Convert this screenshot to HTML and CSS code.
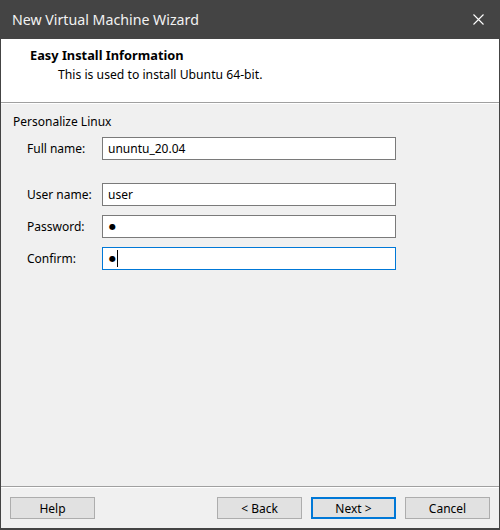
FILE: index.html
```html
<!DOCTYPE html>
<html>
<head>
<meta charset="utf-8">
<title>New Virtual Machine Wizard</title>
<link rel="stylesheet" href="styles.css">
</head>
<body>
<div class="window">
  <div class="titlebar">
    <span class="title">New Virtual Machine Wizard</span>
    <svg class="close" width="11" height="11" viewBox="0 0 11 11"><path d="M0.5 0.5 L10.5 10.5 M10.5 0.5 L0.5 10.5" stroke="#ffffff" stroke-width="1.1" fill="none"/></svg>
  </div>
  <div class="header">
    <div class="heading">Easy Install Information</div>
    <div class="subheading">This is used to install Ubuntu 64-bit.</div>
  </div>
  <div class="content">
    <div class="group-label">Personalize Linux</div>
    <div class="form">
      <div class="row">
        <span class="label">Full name:</span>
        <div class="field">ununtu_20.04</div>
      </div>
      <div class="row row-gap">
        <span class="label">User name:</span>
        <div class="field">user</div>
      </div>
      <div class="row">
        <span class="label">Password:</span>
        <div class="field"><span class="dot">●</span></div>
      </div>
      <div class="row">
        <span class="label">Confirm:</span>
        <div class="field focused"><span class="dot">●</span><span class="caret"></span></div>
      </div>
    </div>
  </div>
  <div class="footer">
    <button class="btn">Help</button>
    <div class="spacer"></div>
    <button class="btn">&lt; Back</button>
    <button class="btn default">Next &gt;</button>
    <button class="btn">Cancel</button>
  </div>
</div>
</body>
</html>
```

FILE: styles.css
```css
html, body {
  margin: 0;
  padding: 0;
  background: #f0f0f0;
}
.window {
  width: 500px;
  height: 530px;
  box-sizing: border-box;
  border: 1px solid #444444;
  border-top: none;
  border-bottom-width: 2px;
  background: #f0f0f0;
  display: flex;
  flex-direction: column;
  font-family: "Noto Sans", "Open Sans", sans-serif;
  font-size: 12px;
  color: #000;
}
.titlebar {
  height: 39px;
  background: #444444;
  display: flex;
  align-items: center;
  margin: 0 -1px;
  padding: 0 16px 0 12px;
}
.title {
  color: #f2f2f2;
  font-size: 14.2px;
  flex: 1;
  padding-bottom: 1px;
}
.close {
  display: block;
}
.header {
  height: 63px;
  background: #ffffff;
  border-bottom: 1px solid #a0a0a0;
  box-shadow: 0 1px 0 #ffffff;
  padding-left: 29px;
}
.heading {
  font-weight: bold;
  font-size: 12.8px;
  margin-top: 7px;
  line-height: 18px;
}
.subheading {
  padding-left: 28px;
  line-height: 18px;
  margin-top: 2px;
  font-size: 12.2px;
}
.content {
  flex: 1;
  padding: 11px 0 0 12px;
}
.group-label {
  line-height: 16px;
}
.form {
  margin: 7px 0 0 14px;
  display: flex;
  flex-direction: column;
  gap: 9px;
}
.row {
  display: flex;
  align-items: center;
}
.row-gap {
  margin-top: 14px;
}
.label {
  width: 75px;
}
.field {
  width: 294px;
  height: 23px;
  box-sizing: border-box;
  border: 1px solid #7a7a7a;
  background: #ffffff;
  padding: 0 5px;
  display: flex;
  align-items: center;
}
.field.focused {
  border-color: #0078d7;
}
.dot {
  font-family: "DejaVu Sans", sans-serif;
  font-size: 8px;
  line-height: 1;
  margin-left: 1px;
}
.caret {
  display: inline-block;
  width: 1px;
  height: 17px;
  background: #000;
  margin-left: 1px;
}
.footer {
  border-top: 1px solid #a0a0a0;
  box-shadow: inset 0 1px 0 #ffffff;
  display: flex;
  align-items: flex-start;
  gap: 9px;
  padding: 10px 9px 9px 9px;
  height: 42px;
  box-sizing: border-box;
}
.spacer {
  flex: 1;
}
.btn {
  width: 85px;
  height: 22px;
  box-sizing: border-box;
  border: 1px solid #adadad;
  background: #e1e1e1;
  font-family: "Noto Sans", "Open Sans", sans-serif;
  font-size: 12px;
  color: #000;
  padding: 0;
  margin: 0;
}
.btn.default {
  border: 2px solid #0078d7;
}
```
